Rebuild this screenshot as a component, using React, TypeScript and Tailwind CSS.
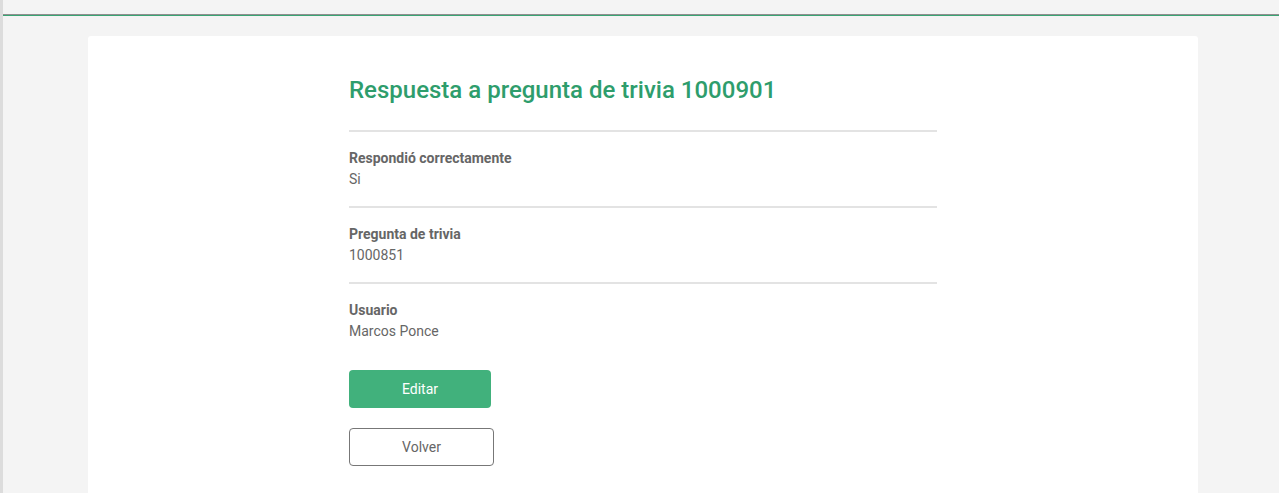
export default function App() {
  const fields = [
    { label: 'Respondió correctamente', value: 'Si' },
    { label: 'Pregunta de trivia', value: '1000851' },
    { label: 'Usuario', value: 'Marcos Ponce' },
  ]

  return (
    <div
      className="min-h-screen bg-[#f4f4f4] border-l-[3px] border-[#dcdcdc]"
      style={{ fontFamily: 'Roboto, "Liberation Sans", sans-serif' }}
    >
      <div className="h-[14px]" />
      <div className="h-px bg-[#8f8f8f]" />
      <div className="h-px bg-[#3aa574]" />

      <div className="pt-5 pl-[85px]">
        <div className="w-[1110px] bg-white rounded-t-[3px] pt-[40px] pb-8">
          <div className="w-[588px] mx-auto">
            <h1 className="text-[24px] leading-[28px] font-medium text-[#2e9d6c]">
              Respuesta a pregunta de trivia 1000901
            </h1>

            <div className="mt-[26px]">
              {fields.map((f) => (
                <div key={f.label} className="border-t-2 border-[#e3e3e3] pt-4 pb-[16px]">
                  <div className="text-[14px] leading-[21px] font-bold text-[#666]">{f.label}</div>
                  <div className="text-[14px] leading-[21px] text-[#666]">{f.value}</div>
                </div>
              ))}
            </div>

            <div className="mt-[12px] flex flex-col items-start gap-5">
              <button className="w-[142px] h-[38px] bg-[#41b17c] text-white text-[14px] rounded-[4px]">
                Editar
              </button>
              <button className="w-[145px] h-[38px] border border-[#777] text-[#666] text-[14px] rounded-[4px] bg-white">
                Volver
              </button>
            </div>
          </div>
        </div>
      </div>
    </div>
  )
}
